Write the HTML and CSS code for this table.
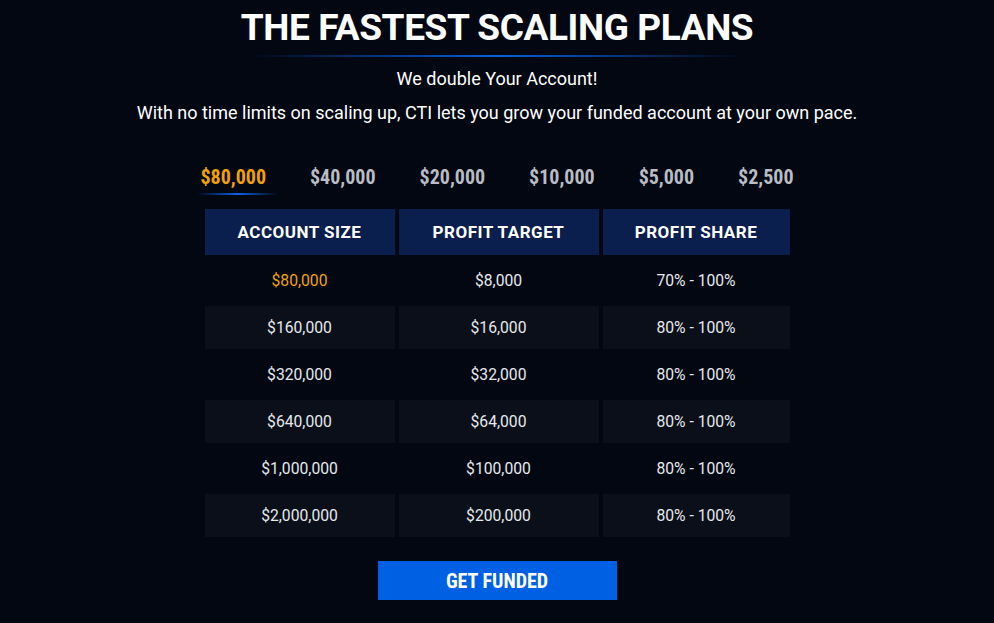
FILE: index.html
```html
<!DOCTYPE html>
<html lang="en">
<head>
<meta charset="utf-8">
<title>Scaling Plans</title>
<link rel="stylesheet" href="styles.css">
</head>
<body>
<main class="page">
  <h1 class="title">THE FASTEST SCALING PLANS</h1>
  <div class="title-line"></div>
  <p class="lead">We double Your Account!</p>
  <p class="sub">With no time limits on scaling up, CTI lets you grow your funded account at your own pace.</p>

  <nav class="tabs">
    <span class="tab active">$80,000</span>
    <span class="tab">$40,000</span>
    <span class="tab">$20,000</span>
    <span class="tab">$10,000</span>
    <span class="tab">$5,000</span>
    <span class="tab">$2,500</span>
  </nav>

  <div class="table">
    <div class="th">ACCOUNT SIZE</div>
    <div class="th">PROFIT TARGET</div>
    <div class="th">PROFIT SHARE</div>

    <div class="td hl">$80,000</div>
    <div class="td">$8,000</div>
    <div class="td">70% - 100%</div>

    <div class="td alt">$160,000</div>
    <div class="td alt">$16,000</div>
    <div class="td alt">80% - 100%</div>

    <div class="td">$320,000</div>
    <div class="td">$32,000</div>
    <div class="td">80% - 100%</div>

    <div class="td alt">$640,000</div>
    <div class="td alt">$64,000</div>
    <div class="td alt">80% - 100%</div>

    <div class="td">$1,000,000</div>
    <div class="td">$100,000</div>
    <div class="td">80% - 100%</div>

    <div class="td alt">$2,000,000</div>
    <div class="td alt">$200,000</div>
    <div class="td alt">80% - 100%</div>
  </div>

  <a class="btn" href="#">GET FUNDED</a>
</main>
</body>
</html>
```

FILE: styles.css
```css
html, body {
  margin: 0;
  padding: 0;
  background: #020712;
}
body {
  font-family: Roboto, "Liberation Sans", sans-serif;
  color: #ffffff;
  width: 994px;
  height: 623px;
  overflow: hidden;
}
.page {
  display: flex;
  flex-direction: column;
  align-items: center;
  padding-top: 4px;
}
.title {
  margin: 0;
  font-family: Roboto, sans-serif;
  font-weight: 700;
  font-size: 37px;
  line-height: 48px;
  letter-spacing: -0.4px;
  color: #ffffff;
}
.title-line {
  width: 496px;
  height: 2px;
  margin-top: 3px;
  background: linear-gradient(90deg, rgba(0,90,230,0) 0%, #0a5fe0 50%, rgba(0,90,230,0) 100%);
}
.lead {
  margin: 11px 0 0;
  font-size: 18px;
  line-height: 22px;
}
.sub {
  margin: 12px 0 0;
  font-size: 18px;
  line-height: 22px;
}
.tabs {
  display: flex;
  gap: 44px;
  margin-top: 41px;
}
.tab {
  position: relative;
  font-family: Roboto, sans-serif;
  font-stretch: condensed;
  font-weight: 700;
  font-size: 20px;
  line-height: 24px;
  color: #b9bcc2;
}
.tab.active {
  color: #f0a202;
}
.tab.active::after {
  content: "";
  position: absolute;
  left: -3px;
  width: 81px;
  top: 28px;
  height: 2px;
  background: linear-gradient(90deg, rgba(0,90,230,0) 0%, #0a62e6 50%, rgba(0,90,230,0) 100%);
}
.table {
  display: grid;
  grid-template-columns: 190px 200px 187px;
  grid-auto-rows: 43px;
  grid-template-rows: 46px;
  gap: 4px;
  margin-top: 20px;
}
.th {
  display: flex;
  align-items: center;
  justify-content: center;
  background: #0a1f4d;
  font-weight: 700;
  font-size: 17px;
  letter-spacing: 0.5px;
  color: #ffffff;
}
.td {
  display: flex;
  align-items: center;
  justify-content: center;
  font-size: 15.7px;
  color: #e6e8ec;
}
.td.alt {
  background: #0a0f19;
}
.td.hl {
  color: #f0a202;
}
.btn {
  margin-top: 24px;
  width: 239px;
  height: 39px;
  display: flex;
  align-items: center;
  justify-content: center;
  background: #0060e4;
  color: #ffffff;
  text-decoration: none;
  font-stretch: condensed;
  font-weight: 700;
  font-size: 20px;
}
```
